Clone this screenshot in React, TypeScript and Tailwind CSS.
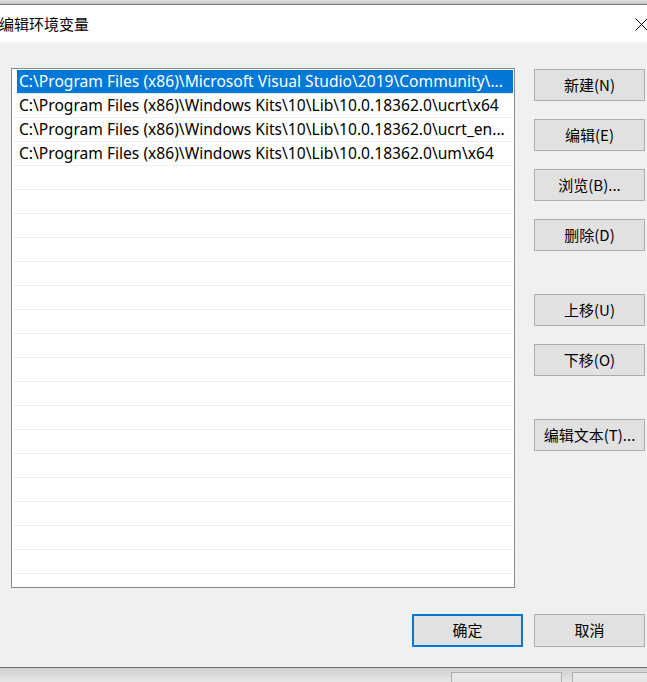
import React from "react";

const FONT = { fontFamily: '"Noto Sans", "Noto Sans CJK SC", sans-serif' };
const CJK = { fontFamily: '"Noto Sans CJK SC", "Noto Sans", sans-serif' };

const paths = [
  "C:\\Program Files (x86)\\Microsoft Visual Studio\\2019\\Community\\...",
  "C:\\Program Files (x86)\\Windows Kits\\10\\Lib\\10.0.18362.0\\ucrt\\x64",
  "C:\\Program Files (x86)\\Windows Kits\\10\\Lib\\10.0.18362.0\\ucrt_en...",
  "C:\\Program Files (x86)\\Windows Kits\\10\\Lib\\10.0.18362.0\\um\\x64",
];

function Btn({ label, primary = false, h = "h-[32px]" }: { label: string; primary?: boolean; h?: string }) {
  return (
    <div
      className={`w-[111px] shrink-0 ${h} flex items-center justify-center pb-[2px] bg-[#e1e1e1] text-[15px] text-black leading-none ${
        primary ? "border-2 border-[#0078d7]" : "border border-[#adadad]"
      }`}
      style={CJK}
    >
      {label}
    </div>
  );
}

export default function App() {
  const rows = Array.from({ length: 21 }, (_, i) => paths[i] ?? "");
  return (
    <div className="w-[647px] h-[682px] overflow-hidden flex flex-col bg-[#f0f0f0]" style={FONT}>
      <div className="h-[4px] shrink-0 bg-gradient-to-b from-[#e4e4e4] to-[#c4c4c4]" />
      <div className="h-px shrink-0 bg-[#7a7a7a]" />
      <div className="h-[37px] shrink-0 bg-white flex items-center justify-between">
        <span className="ml-[-1px] text-[15px] text-black leading-none" style={CJK}>
          编辑环境变量
        </span>
        <svg width="13" height="13" viewBox="0 0 13 13" className="mr-[-1px] mt-[1px]">
          <path d="M0.5 0.5 L12.5 12.5 M12.5 0.5 L0.5 12.5" stroke="#000" strokeWidth="1" />
        </svg>
      </div>
      <div className="h-[625px] shrink-0 flex flex-col pt-[26px]">
        <div className="flex pl-[11px]">
          <div className="w-[504px] h-[520px] shrink-0 border border-[#828790] bg-white pt-px px-px flex flex-col">
            {rows.map((r, i) => (
              <div key={i} className="h-[24px] shrink-0 flex flex-col">
                <div className="h-[23px] flex">
                  <div
                    className={`ml-[4px] flex-1 flex items-center pl-[2px] pt-px text-[15.6px] whitespace-nowrap overflow-hidden ${
                      i === 0 ? "bg-[#0078d7] text-white" : "text-black"
                    }`}
                  >
                    {r}
                  </div>
                </div>
                <div className="h-px bg-[#ededed]" />
              </div>
            ))}
          </div>
          <div className="ml-[19px] mt-px flex flex-col">
            <Btn label="新建(N)" />
            <div className="h-[18px]" />
            <Btn label="编辑(E)" />
            <div className="h-[18px]" />
            <Btn label="浏览(B)..." />
            <div className="h-[18px]" />
            <Btn label="删除(D)" />
            <div className="h-[43px]" />
            <Btn label="上移(U)" />
            <div className="h-[18px]" />
            <Btn label="下移(O)" />
            <div className="h-[43px]" />
            <Btn label="编辑文本(T)..." />
          </div>
        </div>
        <div className="mt-[26px] flex justify-end pr-[2px] gap-[11px]">
          <Btn label="确定" primary h="h-[33px]" />
          <Btn label="取消" h="h-[33px]" />
        </div>
      </div>
      <div className="h-px shrink-0 bg-[#6e6e6e]" />
      <div className="flex-1 min-h-0 overflow-hidden bg-gradient-to-b from-[#cfcfcf] to-[#e6e6e6] flex pt-[4px] pl-[451px] gap-[10px]">
        <div className="w-[111px] h-[20px] shrink-0 border border-[#adadad] bg-[#e6e6e6]" />
        <div className="w-[111px] h-[20px] shrink-0 border border-[#adadad] bg-[#e6e6e6]" />
      </div>
    </div>
  );
}
